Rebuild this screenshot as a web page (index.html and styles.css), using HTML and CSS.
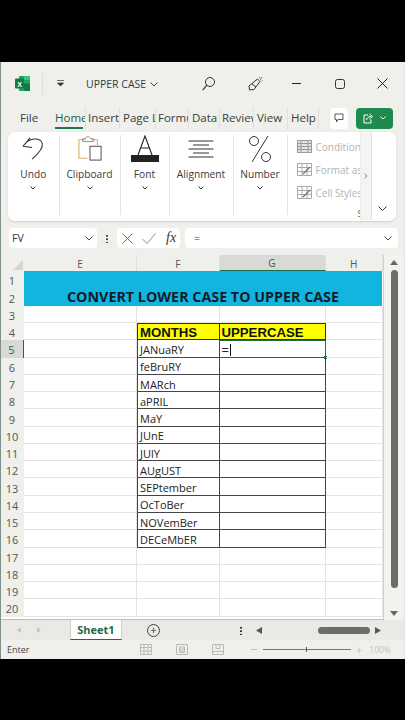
FILE: index.html
```html
<!DOCTYPE html>
<html lang="en">
<head>
<meta charset="utf-8">
<title>UPPER CASE - Excel</title>
<link rel="stylesheet" href="styles.css">
</head>
<body>
<main class="app">
  <header class="titlebar">
    <svg class="xl" viewBox="0 0 15 15"><rect x="4" width="11" height="15" rx="1" fill="#21a366"/><rect x="9" y="7.5" width="6" height="7.5" fill="#107c41"/><rect x="9" width="6" height="4" fill="#33c481"/><rect y="2.5" width="9" height="10" rx="1" fill="#107c41"/><text x="4.5" y="10.5" class="xl-x">X</text></svg>
    <span class="tdiv"></span>
    <svg class="qat" viewBox="0 0 7 7"><path d="M0 .5h7M.5 3l3 3 3-3z" fill="#333" stroke="#333" stroke-width=".7"/></svg>
    <span class="docname">UPPER CASE</span>
    <svg class="chev" viewBox="0 0 8 5"><path d="M.5.5 4 4 7.500.5" fill="none" stroke="#444"/></svg>
    <svg class="search" viewBox="0 0 13 14"><circle cx="8" cy="5" r="4.500" fill="none" stroke="#333"/><path d="M4.800 8.200.8 13.200" stroke="#333" stroke-width="1.100"/></svg>
    <svg class="pen" viewBox="0 0 15 15"><path d="M9.500 3 12 5.500 6 13.500 1.500 14 1 10z M4 8l4 3" fill="none" stroke="#333"/><path d="M11 1l1 1M14 1l-2 3M14.500 4.500l-1 .5" stroke="#777" fill="none"/></svg>
    <svg class="min" viewBox="0 0 9 1"><path d="M0 .5h9" stroke="#222"/></svg>
    <svg class="max" viewBox="0 0 10 10"><rect x=".5" y=".5" width="9" height="9" rx="2" fill="none" stroke="#333"/></svg>
    <svg class="close" viewBox="0 0 11 11"><path d="M.5.5l10 10M10.500.5l-10 10" stroke="#222"/></svg>
  </header>

  <nav class="tabs">
    <span class="tab t-file">File</span>
    <span class="tab t-home">Home</span>
    <span class="tab t-insert">Insert</span>
    <span class="tab t-page">Page Layout</span>
    <span class="tab t-form">Formulas</span>
    <span class="tab t-data">Data</span>
    <span class="tab t-rev">Review</span>
    <span class="tab t-view">View</span>
    <span class="tab t-help">Help</span>
    <span class="comment"><svg viewBox="0 0 10 10"><path d="M1 1h8v5.500H4L2.500 9V6.500H1z" fill="none" stroke="#333" stroke-width=".8"/></svg></span>
    <span class="share"><svg class="share-i" viewBox="0 0 11 11"><path d="M5 2H1v8h7V6.500M3.500 7C4 4.500 5.500 3.500 8 3.500M6.500 1 9.500 3.500 6.500 6" fill="none" stroke="#fff"/></svg><svg class="share-c" viewBox="0 0 6 4"><path d="M.5.5 3 3 5.500.5" fill="none" stroke="#fff"/></svg></span>
  </nav>

  <section class="ribbon">
    <div class="group g-undo">
      <svg class="big" viewBox="0 0 26 28"><path d="M2 11 10 2M2 11l10 1.500M4 9C9 2 21 1 23 8c1 4-4 11-11 17" fill="none" stroke="#333" stroke-width="1.100"/></svg>
      <span class="glabel">Undo</span><svg class="gchev" viewBox="0 0 6 4"><path d="M.5.5 3 3 5.500.5" fill="none" stroke="#333"/></svg>
    </div>
    <div class="group g-clip">
      <svg class="big" viewBox="0 0 26 28"><path d="M8 4H1v20h9M14 4h7v6" fill="none" stroke="#d9b26a" stroke-width="1.200"/><path d="M5 6V3h3c0-3 5-3 6 0h3v3z" fill="none" stroke="#888"/><rect x="13" y="11" width="12" height="15" fill="#fff" stroke="#444"/></svg>
      <span class="glabel">Clipboard</span><svg class="gchev" viewBox="0 0 6 4"><path d="M.5.5 3 3 5.500.5" fill="none" stroke="#333"/></svg>
    </div>
    <div class="group g-font">
      <svg class="big wide" viewBox="0 0 28 28"><path d="M7 20 14 1l7 19M9.500 13h9" fill="none" stroke="#222" stroke-width="1.100"/><rect y="20" width="28" height="7" fill="#222"/></svg>
      <span class="glabel">Font</span><svg class="gchev" viewBox="0 0 6 4"><path d="M.5.5 3 3 5.500.5" fill="none" stroke="#333"/></svg>
    </div>
    <div class="group g-align">
      <svg class="big wide" viewBox="0 0 28 28"><path d="M1.500 6h25M6 10h16M1.500 14h25M6 18h16M1.500 22h25" fill="none" stroke="#333"/></svg>
      <span class="glabel">Alignment</span><svg class="gchev" viewBox="0 0 6 4"><path d="M.5.5 3 3 5.500.5" fill="none" stroke="#333"/></svg>
    </div>
    <div class="group g-num">
      <svg class="big" viewBox="0 0 24 28"><circle cx="6" cy="6" r="4.500" fill="none" stroke="#333"/><circle cx="18" cy="22" r="4.500" fill="none" stroke="#333"/><path d="M20 1 4 27" stroke="#333"/></svg>
      <span class="glabel">Number</span><svg class="gchev" viewBox="0 0 6 4"><path d="M.5.5 3 3 5.500.5" fill="none" stroke="#333"/></svg>
    </div>
    <div class="g-styles">
      <div class="style-row"><svg viewBox="0 0 15 13"><path d="M.5.500h14v12H.5zM.5 3.500h14M.5 6.500h14M.5 9.500h14M4 .5v12M11 .5v12" fill="#e4e4e4" stroke="#999"/></svg><span>Conditional</span></div>
      <div class="style-row"><svg viewBox="0 0 15 13"><path d="M.5.500h14v12H.5zM.5 4.500h14M.5 8.500h14M5 .5v12M10 .5v12" fill="none" stroke="#aaa"/><path d="M6 11 13 4" stroke="#777" stroke-width="1.500"/></svg><span>Format as</span></div>
      <div class="style-row"><svg viewBox="0 0 15 13"><path d="M.5.500h14v12H.5zM.5 4.500h14M.5 8.500h14M5 .5v12M10 .5v12" fill="none" stroke="#aaa"/><path d="M6 11 13 4" stroke="#777" stroke-width="1.500"/></svg><span>Cell Styles</span></div>
      <span class="styles-s">Styles</span>
    </div>
    <div class="ribbon-scroll"><svg viewBox="0 0 4 6"><path d="M.5.5 3 3 .5 5.500" fill="none" stroke="#555" stroke-width=".7"/></svg></div>
    <svg class="ribbon-collapse" viewBox="0 0 9 6"><path d="M.5.5 4.500 4.500 8.500.5" fill="none" stroke="#333"/></svg>
  </section>

  <section class="fbar">
    <div class="namebox"><span>FV</span><svg viewBox="0 0 8 5"><path d="M.5.5 4 4 7.500.5" fill="none" stroke="#444"/></svg></div>
    <span class="fdots"></span>
    <div class="fbtns">
      <svg viewBox="0 0 11 11"><path d="M.5.5l10 10M10.500.5l-10 10" stroke="#a5565f"/></svg>
      <svg viewBox="0 0 14 11"><path d="M.5 6 5 10.500 13.500.5" fill="none" stroke="#6f9c88"/></svg>
      <i class="fx">fx</i>
    </div>
    <div class="finput"><span>=</span><svg viewBox="0 0 8 5"><path d="M.5.5 4 4 7.500.5" fill="none" stroke="#444"/></svg></div>
  </section>

  <section class="sheetwrap">
    <div class="sheet">
      <div class="corner"><svg viewBox="0 0 10 10"><path d="M10 0v10H0z" fill="#d4d4d4"/></svg></div>
      <div class="ch">E</div><div class="ch">F</div><div class="ch ch-on">G</div><div class="ch">H</div>

      <div class="rh">1</div><div class="banner">CONVERT LOWER CASE TO UPPER CASE</div>
      <div class="rh">2</div>
      <div class="rh">3</div><div class="c"></div><div class="c"></div><div class="c"></div><div class="c"></div>
      <div class="rh">4</div><div class="c"></div><div class="c hd hd-f">MONTHS</div><div class="c hd hd-g">UPPERCASE</div><div class="c"></div>
      <div class="rh rh-on">5</div><div class="c"></div><div class="c m">JANuaRY</div><div class="c g active">=<span class="caret"></span><span class="handle"></span></div><div class="c"></div>
      <div class="rh">6</div><div class="c"></div><div class="c m">feBruRY</div><div class="c g"></div><div class="c"></div>
      <div class="rh">7</div><div class="c"></div><div class="c m">MARch</div><div class="c g"></div><div class="c"></div>
      <div class="rh">8</div><div class="c"></div><div class="c m">aPRIL</div><div class="c g"></div><div class="c"></div>
      <div class="rh">9</div><div class="c"></div><div class="c m">MaY</div><div class="c g"></div><div class="c"></div>
      <div class="rh">10</div><div class="c"></div><div class="c m">JUnE</div><div class="c g"></div><div class="c"></div>
      <div class="rh">11</div><div class="c"></div><div class="c m">JUlY</div><div class="c g"></div><div class="c"></div>
      <div class="rh">12</div><div class="c"></div><div class="c m">AUgUST</div><div class="c g"></div><div class="c"></div>
      <div class="rh">13</div><div class="c"></div><div class="c m">SEPtember</div><div class="c g"></div><div class="c"></div>
      <div class="rh">14</div><div class="c"></div><div class="c m">OcToBer</div><div class="c g"></div><div class="c"></div>
      <div class="rh">15</div><div class="c"></div><div class="c m">NOVemBer</div><div class="c g"></div><div class="c"></div>
      <div class="rh">16</div><div class="c"></div><div class="c m">DECeMbER</div><div class="c g"></div><div class="c"></div>
      <div class="rh">17</div><div class="c"></div><div class="c"></div><div class="c"></div><div class="c"></div>
      <div class="rh">18</div><div class="c"></div><div class="c"></div><div class="c"></div><div class="c"></div>
      <div class="rh">19</div><div class="c"></div><div class="c"></div><div class="c"></div><div class="c"></div>
      <div class="rh">20</div><div class="c"></div><div class="c"></div><div class="c"></div><div class="c"></div>
    </div>
    <aside class="vscroll">
      <svg viewBox="0 0 8 5"><path d="M4 0l4 5H0z" fill="#666"/></svg>
      <span class="vthumb"></span>
      <svg viewBox="0 0 8 5"><path d="M4 5 8 0H0z" fill="#666"/></svg>
    </aside>
  </section>

  <section class="sheettabs">
    <svg class="nav" viewBox="0 0 4 6"><path d="M4 0v6L0 3z" fill="#c4c4c4"/></svg>
    <svg class="nav" viewBox="0 0 4 6"><path d="M0 0v6l4-3z" fill="#c4c4c4"/></svg>
    <span class="sheet-tab">Sheet1</span>
    <span class="add">+</span>
    <span class="hfill">
      <span class="hdots"></span>
      <svg class="harrow" viewBox="0 0 6 7"><path d="M6 0v7L0 3.500z" fill="#555"/></svg>
      <span class="hthumb"></span>
      <svg class="harrow" viewBox="0 0 6 7"><path d="M0 0v7l6-3.500z" fill="#555"/></svg>
    </span>
  </section>

  <footer class="status">
    <span class="enter">Enter</span>
    <svg viewBox="0 0 12 11"><path d="M.5.500h11v10H.5zM.5 3.500h11M.5 7h11M4 .5v10M8 .5v10" fill="none" stroke="#b9b9b9"/></svg>
    <svg viewBox="0 0 12 11"><path d="M.5.500h11v10H.5zM3.500 3h5v5.500h-5zM3.500 5h5M3.500 7h5" fill="none" stroke="#b9b9b9"/></svg>
    <svg viewBox="0 0 12 11"><path d="M.5.500h11v10H.5zM4 .5v4h4v-4M.5 7.500h11" fill="none" stroke="#b9b9b9"/></svg>
    <span class="zminus"></span>
    <span class="slider"><span class="tick"></span></span>
    <span class="zplus">+</span>
    <span class="zoom">100%</span>
  </footer>
</main>
</body>
</html>
```

FILE: styles.css
```css
* { box-sizing: border-box; }
html, body { margin: 0; height: 100%; background: #000; overflow: hidden; }
body { padding-top: 62px; font-family: "Open Sans", "Noto Sans", "Liberation Sans", sans-serif; color: #333; }
.app { width: 405px; height: 597px; background: #efefec; border-left: 1px solid #7f9189; border-right: 1px solid #dfe6e2; display: flex; flex-direction: column; }

.titlebar { height: 43px; display: flex; align-items: center; flex: none; }
.xl { width: 15px; height: 15px; margin-left: 14px; flex: none; }
.xl-x { font: 700 7px "Liberation Sans", sans-serif; fill: #fff; text-anchor: middle; }
.tdiv { width: 1px; height: 22px; background: #dcdcda; margin-left: 12px; }
.qat { width: 7px; height: 7px; margin-left: 14px; }
.docname { font-size: 10.500px; margin-left: 22px; width: 60px; white-space: nowrap; color: #3a3a3a; }
.chev { width: 8px; height: 5px; margin-left: 4px; margin-top: 1px; }
.search { width: 13px; height: 14px; margin-left: 44px; }
.pen { width: 15px; height: 15px; margin-left: 33px; }
.min { width: 9px; height: 1px; margin-left: 29px; }
.max { width: 10px; height: 10px; margin-left: 34px; }
.close { width: 11px; height: 11px; margin-left: 32px; }

.tabs { height: 27px; display: flex; align-items: center; flex: none; padding-bottom: 1px; font-size: 11.500px; }
.tab { display: block; overflow: hidden; white-space: nowrap; height: 22px; line-height: 22px; flex: none; border-right: 1px solid #dfdfdc; color: #3c3c3c; padding-left: 3px; }
.t-file { width: 50px; padding-left: 19px; border-right: 0; }
.t-home { width: 35px; padding-left: 4px; color: #1f5f3f; position: relative; font-weight: 500; }
.t-home::after { content: ""; position: absolute; left: 4px; bottom: 0; width: 28px; height: 2px; background: #1b7a4b; }
.t-insert { width: 34px; padding-left: 2px; }
.t-page { width: 36px; }
.t-form { width: 33px; padding-left: 2px; }
.t-data { width: 31px; padding-left: 3px; }
.t-rev { width: 34px; padding-left: 2px; }
.t-view { width: 34px; padding-left: 3px; }
.t-help { width: 31px; padding-left: 3px; border-right: 1px solid #dfdfdc; }
.comment { width: 18px; height: 21px; background: #fff; border-radius: 4px; margin-left: 11px; display: flex; align-items: center; justify-content: center; }
.comment svg { width: 10px; height: 10px; }
.share { width: 37px; height: 21px; background: #1f8a50; border-radius: 4px; margin-left: 8px; display: flex; align-items: center; justify-content: center; gap: 6px; }
.share-i { width: 11px; height: 11px; }
.share-c { width: 6px; height: 4px; }

.ribbon { position: relative; height: 89px; margin: 0 8px 0 7px; background: #fff; border-radius: 7px; display: flex; flex: none; box-shadow: 0 1px 2px #d0d0cc; padding-top: 3px; overflow: hidden; }
.group { flex: none; height: 80px; display: flex; flex-direction: column; align-items: center; border-right: 1px solid #e4e4e2; }
.big { width: 24px; height: 28px; }
.big.wide { width: 28px; }
.glabel { font-size: 10.200px; line-height: 13px; margin-top: 5px; white-space: nowrap; color: #3a3a3a; }
.gchev { width: 6px; height: 4px; margin-top: 5px; }
.g-undo { width: 51.500px; }
.g-clip { width: 61px; }
.g-font { width: 49px; }
.g-align { width: 64px; }
.g-num { width: 54px; }
.g-styles { width: 72px; padding-left: 9px; position: relative; overflow: hidden; }
.style-row { display: flex; align-items: center; gap: 4px; height: 23px; font-size: 10px; color: #b2b2b2; white-space: nowrap; }
.style-row svg { width: 15px; height: 13px; flex: none; }
.styles-s { position: absolute; left: 70px; top: 72px; font-size: 9px; color: #666; }
.ribbon-scroll { position: absolute; left: 352px; top: 0; width: 12px; height: 88px; background: #f4f4f2; border-left: 1px solid #ececea; border-right: 1px solid #e2e2e0; display: flex; align-items: center; justify-content: center; }
.ribbon-scroll svg { width: 4px; height: 6px; }
.ribbon-collapse { position: absolute; left: 370px; top: 74px; width: 9px; height: 6px; }

.fbar { height: 34px; display: flex; align-items: center; padding: 0 6px 0 8px; flex: none; }
.namebox { width: 88px; height: 20px; background: #fff; border-radius: 4px; display: flex; align-items: center; justify-content: space-between; padding: 0 4px 0 3px; font-size: 10.500px; }
.namebox svg, .finput svg { width: 8px; height: 5px; }
.fdots { width: 2px; height: 9px; margin: 0 9px 0 9px; background: radial-gradient(circle, #444 1px, transparent 1.200px) 0 0 / 2px 3.500px; }
.fbtns { width: 63px; height: 20px; background: #fff; border-radius: 4px; display: flex; align-items: center; padding-left: 5px; }
.fbtns svg:nth-child(1) { width: 11px; height: 11px; }
.fbtns svg:nth-child(2) { width: 14px; height: 11px; margin-left: 9px; }
.fx { font: italic 14px "Liberation Serif", serif; margin-left: 10px; color: #333; }
.finput { flex: 1; height: 20px; margin-left: 5px; background: #fff; border-radius: 4px; display: flex; align-items: center; justify-content: space-between; padding: 0 6px 0 9px; font-size: 10.500px; }

.sheetwrap { display: flex; height: 365px; flex: none; background: #f2f2ef; }
.sheet { display: grid; grid-template-columns: 23px 113px 82.500px 106px 57.500px; grid-template-rows: 16.300px repeat(20, 17.280px); width: 384px; background: #fff; border-right: 1px solid #d2d2d0; align-content: start; height: 365px; border-bottom: 1px solid #bdbdbb; }
.corner { background: #efefec; display: flex; align-items: flex-end; justify-content: flex-end; padding: 0 1px 1px 0; }
.corner svg { width: 10px; height: 10px; }
.ch { background: #efefec; font-size: 10px; color: #555; display: flex; align-items: center; justify-content: center; border-right: 1px solid #e0e0de; padding-top: 1px; }
.ch-on { background: #d9d9d7; color: #1f6b45; border-bottom: 1.500px solid #1f6b45; }
.rh { background: #efefec; font-size: 11px; color: #555; display: flex; align-items: center; justify-content: center; padding: 2px 1px 0 0; }
.rh-on { background: #d9d9d7; color: #1f6b45; border-right: 1.500px solid #1f6b45; }
.banner { grid-column: 2 / 6; grid-row: 2 / 4; background: #12b5e0; color: #111d2b; font: 700 14.300px "Open Sans", "Noto Sans", sans-serif; display: flex; align-items: flex-end; justify-content: center; margin-right: 1px; }
.c { border-right: 1px solid #e4e4e4; border-bottom: 1px solid #e4e4e4; font-size: 11px; color: #222; display: flex; align-items: center; padding: 2px 0 0 2px; white-space: nowrap; position: relative; }
.hd { background: #ffff00; font: 700 13.200px "Liberation Sans", sans-serif; color: #111; border-top: 1px solid #333; border-bottom: 1px solid #333; }
.hd-f { border-left: 1px solid #333; border-right: 1px solid #333; }
.hd-g { border-right: 1px solid #333; }
.m { border-left: 1px solid #444; border-right: 1px solid #444; border-bottom: 1px solid #444; }
.g { border-right: 1px solid #444; border-bottom: 1px solid #444; }
.active { border: 1px solid #1f6b45; border-left: 0; font-size: 13px; }
.caret { width: 1px; height: 12px; background: #111; margin-left: 1px; }
.handle { position: absolute; right: -2px; bottom: -2px; width: 3px; height: 3px; background: #1f6b45; }

.vscroll { width: 20px; display: flex; flex-direction: column; align-items: center; padding: 5px 0 3px; }
.vscroll svg { width: 8px; height: 5px; flex: none; }
.vthumb { width: 7px; height: 318px; margin: 5px 0 23px; background: #6c6c6c; border-radius: 4px; }

.sheettabs { height: 20px; display: flex; align-items: center; flex: none; background: #e9e9e6; }
.nav { width: 4px; height: 6px; margin-left: 16px; flex: none; }
.sheet-tab { width: 52px; height: 20px; margin-left: 29px; margin-top: -1px; background: #fff; border-bottom: 1.500px solid #1f6b45; border-left: 1px solid #cfcfcd; border-right: 1px solid #cfcfcd; font-size: 11px; font-weight: 700; color: #1f6b45; display: flex; align-items: center; justify-content: center; }
.add { width: 13px; height: 13px; margin-left: 25px; border: 1px solid #444; border-radius: 50%; font-size: 11px; line-height: 10px; text-align: center; color: #333; flex: none; }
.hfill { flex: 1; height: 20px; margin-left: 6px; display: flex; align-items: center; }
.hdots { width: 2px; height: 9px; margin-left: 74px; background: radial-gradient(circle, #333 1px, transparent 1.200px) 0 0 / 2px 3.500px; }
.harrow { width: 6px; height: 7px; flex: none; }
.harrow:nth-of-type(1) { margin-left: 14px; }
.hthumb { width: 52px; height: 7px; margin-left: 56px; margin-right: 5px; background: #6c6c6c; border-radius: 4px; }

.status { height: 19px; display: flex; align-items: center; flex: none; background: #efefec; font-size: 9px; color: #444; }
.enter { width: 139px; padding-left: 6px; }
.status svg { width: 12px; height: 11px; flex: none; margin-right: 24px; }
.zminus { width: 6px; height: 1px; background: #c4c4c4; margin-left: 3px; }
.slider { position: relative; width: 88px; height: 1px; background: #777; margin-left: 6px; }
.tick { position: absolute; left: 43px; top: -2px; width: 1px; height: 5px; background: #555; }
.zplus { font-size: 11px; color: #c0c0c0; margin-left: 5px; }
.zoom { color: #c4c4c4; margin-left: 7px; font-size: 8.500px; }
```
